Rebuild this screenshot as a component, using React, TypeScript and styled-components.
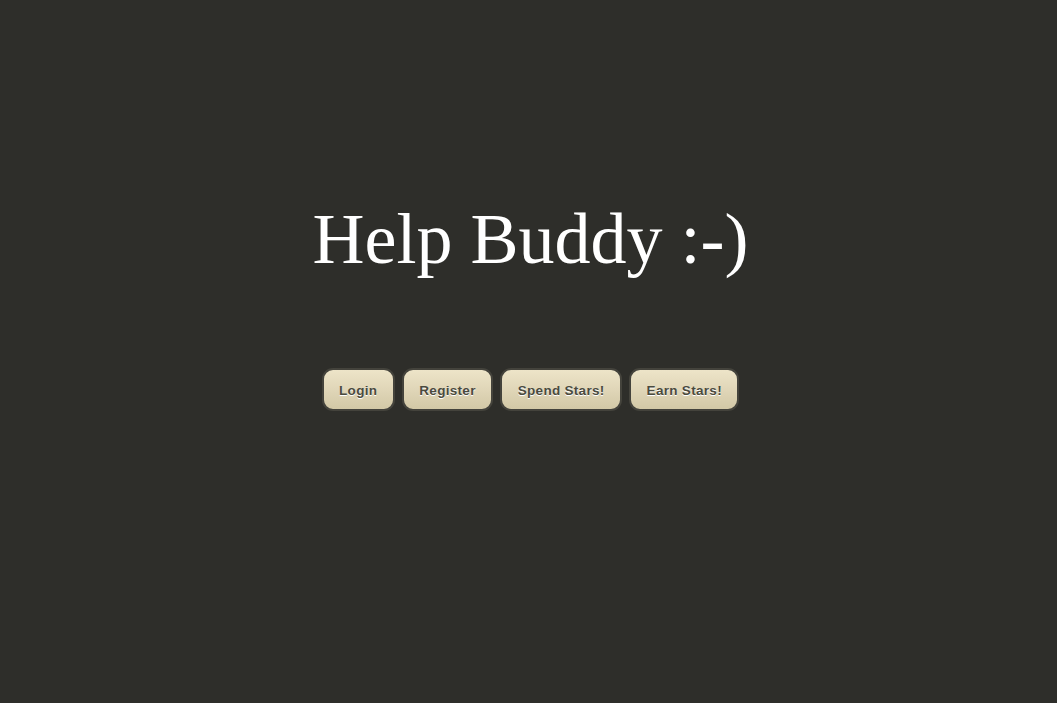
import React from "react";
import styled, { createGlobalStyle } from "styled-components";

const Global = createGlobalStyle`
  html, body { margin: 0; padding: 0; background: #2e2e2a; }
  body { font-family: "Liberation Serif", serif; }
`;

const Page = styled.div`
  min-height: 703px;
  display: flex;
  flex-direction: column;
  align-items: center;
  padding-top: 198px;
  box-sizing: border-box;
`;

const Title = styled.h1`
  margin: 0;
  font-family: "Liberation Serif", "Times New Roman", serif;
  font-weight: normal;
  font-size: 72px;
  line-height: 83px;
  color: #ffffff;
  padding-left: 4px;
`;

const Nav = styled.nav`
  margin-top: 87px;
  display: flex;
  gap: 7px;
  padding-left: 4px;
`;

const Button = styled.a`
  display: flex;
  align-items: center;
  height: 43px;
  box-sizing: border-box;
  padding: 1px 15.5px 0;
  border: 2px solid #44433c;
  border-radius: 11px;
  background: linear-gradient(to bottom, #ede4c8 0%, #e0d6b8 50%, #d2c8a6 100%);
  font-family: "Liberation Sans", Arial, sans-serif;
  font-weight: bold;
  font-size: 13.5px;
  letter-spacing: 0.3px;
  color: #4a4a3e;
  text-shadow: 0 1px 0 #ffffff;
  text-decoration: none;
  cursor: pointer;
`;

export default function App() {
  return (
    <>
      <Global />
      <Page>
        <Title>Help Buddy :-)</Title>
        <Nav>
          <Button>Login</Button>
          <Button>Register</Button>
          <Button>Spend Stars!</Button>
          <Button>Earn Stars!</Button>
        </Nav>
      </Page>
    </>
  );
}
